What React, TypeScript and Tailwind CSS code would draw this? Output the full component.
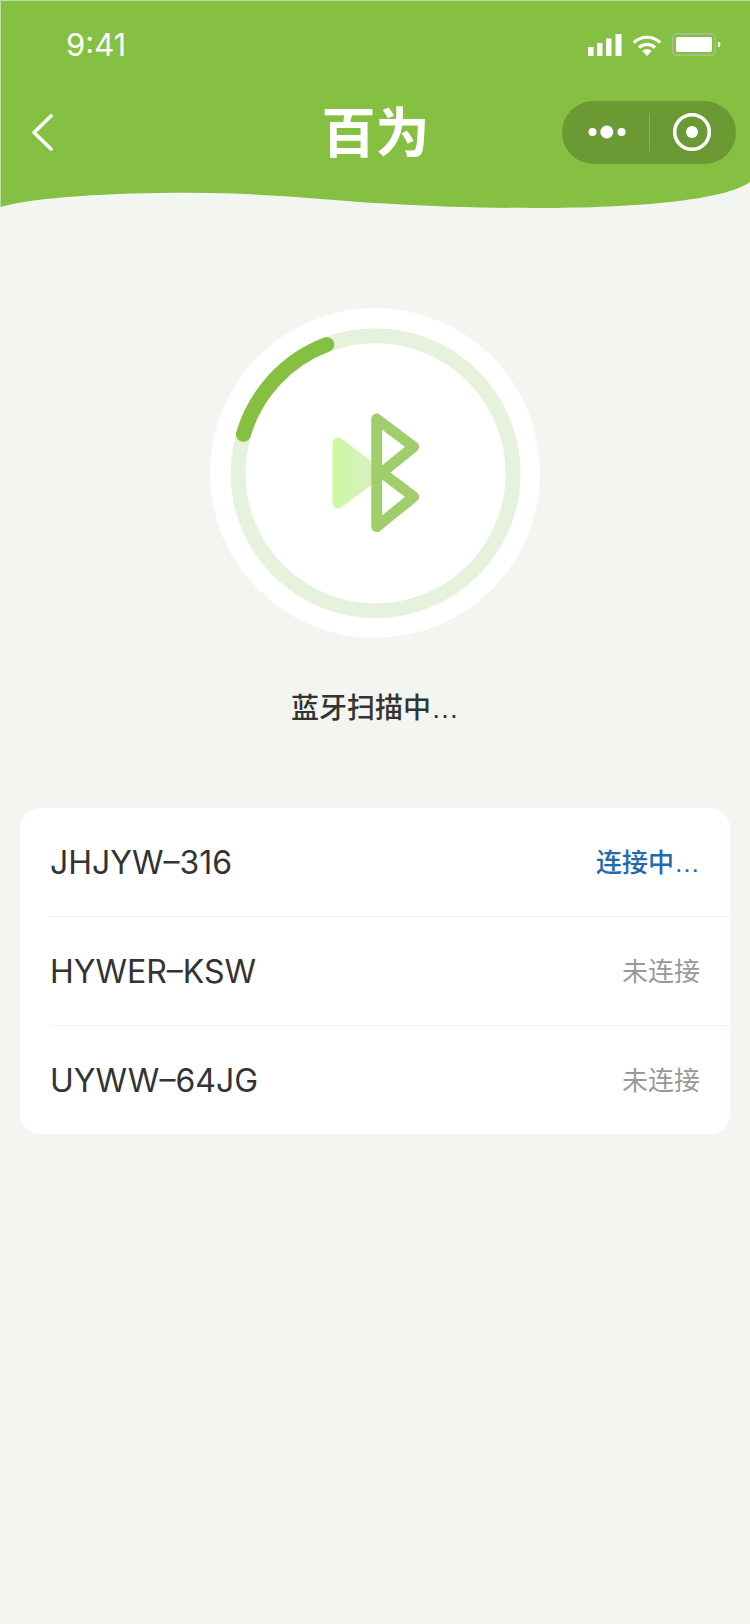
import React from "react";

const cjk = "font-['Inter','Noto_Sans_CJK_SC',sans-serif]";
const lib = "font-['Liberation_Sans','Noto_Sans_CJK_SC',sans-serif]";

function Signal() {
  return (
    <svg width="34" height="22" viewBox="0 0 34 22" fill="#fff">
      <rect x="0" y="13" width="5.5" height="9" />
      <rect x="9" y="9" width="5.5" height="13" />
      <rect x="18" y="4.5" width="5.5" height="17.5" />
      <rect x="27.5" y="0" width="6" height="22" />
    </svg>
  );
}

function Wifi() {
  return (
    <svg width="30" height="22" viewBox="0 0 30 22" fill="none" stroke="#fff">
      <path d="M1.8 8.6 A19 19 0 0 1 28.2 8.6" strokeWidth="3.2" />
      <path d="M7 13.6 A11.5 11.5 0 0 1 23 13.6" strokeWidth="3.2" />
      <path d="M10.2 17 A7 7 0 0 1 19.8 17 L15 22 Z" fill="#fff" stroke="none" />
    </svg>
  );
}

function Battery() {
  return (
    <svg width="49" height="23" viewBox="0 0 49 23">
      <rect x="0.7" y="0.7" width="42.6" height="21.6" rx="4" fill="none" stroke="#a9bd97" strokeWidth="1.4" />
      <rect x="4" y="4" width="36" height="15" rx="2" fill="#fff" />
      <path d="M46 8.5 Q48.5 9.5 48.5 11.5 Q48.5 13.5 46 14.5 Z" fill="#fff" />
    </svg>
  );
}

function Back() {
  return (
    <svg width="24" height="38" viewBox="0 0 24 38" fill="none" stroke="#fff" strokeWidth="3.6" strokeLinecap="round" strokeLinejoin="round">
      <path d="M20 3 L3 19.5 L20 36" />
    </svg>
  );
}

function Capsule() {
  return (
    <div className="flex h-[63px] w-[174px] items-center rounded-full bg-[#6b9a35]">
      <div className="flex h-full w-[87px] items-center justify-center pl-[10px]">
        <svg width="46" height="14" viewBox="0 0 46 14" fill="#fff">
          <circle cx="4.5" cy="7" r="4" />
          <circle cx="18.8" cy="7" r="6.5" />
          <circle cx="33.5" cy="7" r="4" />
        </svg>
      </div>
      <div className="h-[37px] w-px bg-[#88b058]" />
      <div className="flex h-full flex-1 items-center justify-center pr-[2px]">
        <svg width="40" height="40" viewBox="0 0 40 40">
          <circle cx="20" cy="20" r="17.3" fill="none" stroke="#fff" strokeWidth="3.6" />
          <circle cx="20" cy="20" r="6" fill="#fff" />
        </svg>
      </div>
    </div>
  );
}

function Wave() {
  return (
    <svg className="block" width="750" height="34" viewBox="0 0 750 34">
      <path
        d="M0 31 C 36 21, 110 16.7, 190 16.7 C 265 16.7, 325 24, 385 27.5 C 440 31, 490 32, 535 32 C 640 32, 725 24, 750 6 L750 0 L0 0 Z"
        fill="#85c042"
      />
      <path d="M0.5 0 L0.5 30.5" stroke="#c4dca8" strokeWidth="1" />
    </svg>
  );
}

function Scanner() {
  return (
    <div className="mx-auto h-[330px] w-[330px] rounded-full bg-white">
      <svg className="block" width="330" height="330" viewBox="210 308 330 330" fill="none">
        <defs>
          <linearGradient id="tri" gradientUnits="userSpaceOnUse" x1="333" y1="0" x2="380" y2="0">
            <stop offset="0" stopColor="#cdf99e" />
            <stop offset="1" stopColor="#dcedca" />
          </linearGradient>
        </defs>
        <circle cx="375.6" cy="473.3" r="137.5" stroke="#e6f2dc" strokeWidth="15" />
        <path d="M243.4 434.3 A137.5 137.5 0 0 1 326.8 344.6" stroke="#85c042" strokeWidth="15" strokeLinecap="round" />
        <path d="M338 443 L338 503 L378 473 Z" fill="url(#tri)" stroke="url(#tri)" strokeWidth="11" strokeLinejoin="round" />
        <path
          d="M376.7 419 L413.7 446.7 L376.7 476.7 M376.7 468.7 L413.7 496.7 L376.7 526.7 Z M376.7 419 L376.7 526.7"
          stroke="#a0ce6b"
          strokeWidth="10.8"
          strokeLinecap="round"
          strokeLinejoin="round"
        />
      </svg>
    </div>
  );
}

function Row({ name, status, active }: { name: string; status: string; active?: boolean }) {
  return (
    <div className="flex h-[108px] items-center justify-between px-[30px] pt-[2px]">
      <span className={`${cjk} text-[32px] leading-[40px] text-[#333333]`}>{name}</span>
      <span className={`${lib} text-[26px] leading-[40px] ${active ? "font-medium text-[#2369ab]" : "text-[#999999]"}`}>{status}</span>
    </div>
  );
}

export default function App() {
  return (
    <div className="min-h-[1624px] w-[750px] bg-[#f3f5f0]">
      <header className="h-[176px] border-l border-t border-[#c4dca8] bg-[#85c042]">
        <div className="flex h-[87px] items-center justify-between pl-[65px] pr-[29px]">
          <span className="font-['Inter',sans-serif] text-[31px] font-normal leading-none text-white">9:41</span>
          <div className="flex items-center gap-[10px] pl-[2px]">
            <Signal />
            <Wifi />
            <Battery />
          </div>
        </div>
        <div className="grid h-[88px] grid-cols-[1fr_auto_1fr] items-center">
          <div className="pl-[30px]">
            <Back />
          </div>
          <h1 className="pb-[4px] font-['Noto_Sans_CJK_SC',sans-serif] text-[54px] font-bold leading-none text-white">百为</h1>
          <div className="flex justify-end pr-[14px]">
            <Capsule />
          </div>
        </div>
      </header>
      <Wave />
      <main className="pt-[98px]">
        <Scanner />
        <p className={`${lib} mt-[51px] text-center text-[28px] font-medium leading-[40px] text-[#333333]`}>蓝牙扫描中…</p>
        <section className="mx-[20px] mt-[79px] rounded-[20px] bg-white">
          <Row name="JHJYW–316" status="连接中…" active />
          <div className="ml-[30px] h-px bg-[#f0f0f0]" />
          <Row name="HYWER–KSW" status="未连接" />
          <div className="ml-[30px] h-px bg-[#f0f0f0]" />
          <Row name="UYWW–64JG" status="未连接" />
        </section>
      </main>
    </div>
  );
}
